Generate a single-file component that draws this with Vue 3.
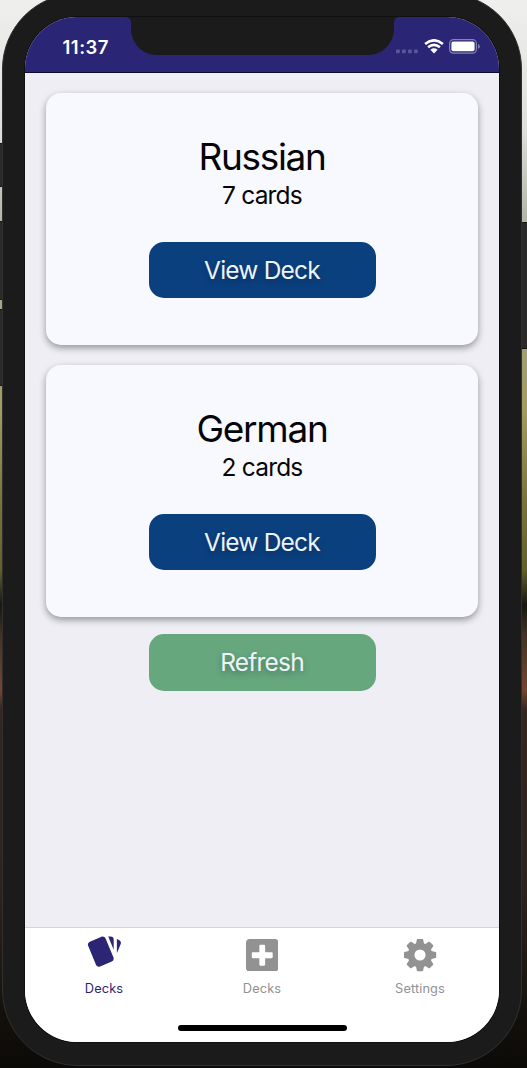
<script setup>
const decks = [
  { name: 'Russian', count: '7 cards' },
  { name: 'German', count: '2 cards' },
]
const teeth = [0, 45, 90, 135, 180, 225, 270, 315]
</script>

<template>
  <div class="desktop">
    <i class="side left mute"></i>
    <i class="side left up"></i>
    <i class="side left down"></i>
    <i class="side right power"></i>
    <div class="phone">
      <div class="screen">
        <header class="status">
          <span class="time">11:37</span>
          <svg class="notch" width="275" height="39" viewBox="0 0 275 39">
            <path d="M0 0H275C271 0 269 2 269 7V11C269 27 257 38 243 38H32C18 38 6 27 6 11V7C6 2 4 0 0 0Z" fill="#1b1b1b" />
          </svg>
          <div class="indicators">
            <svg width="23" height="5" viewBox="0 0 23 5" fill="#5b5898">
              <rect x="0" y=".5" width="3.800" height="3.800" rx="1" /><rect x="6" y=".5" width="3.800" height="3.800" rx="1" />
              <rect x="12" y=".5" width="3.800" height="3.800" rx="1" /><rect x="18" y=".5" width="3.800" height="3.800" rx="1" />
            </svg>
            <svg class="wifi" width="20" height="15" viewBox="0 0 20 15">
              <path d="M1.1 5.1Q10 -2.5 18.9 5.1M4.1 8.3Q10 3.3 15.9 8.3" fill="none" stroke="#fff" stroke-width="2.6" />
              <path d="M6.4 10.8Q10 7.9 13.6 10.8L10 14.5Z" fill="#fff" />
            </svg>
            <svg class="battery" width="32" height="15" viewBox="0 0 32 15">
              <rect x=".6" y=".7" width="26.8" height="13.4" rx="3.8" fill="none" stroke="#8583b4" stroke-width="1.2" />
              <rect x="2.4" y="2.5" width="23.2" height="9.8" rx="2" fill="#fff" />
              <path d="M29 5Q30.8 5.7 30.8 7.4T29 9.8Z" fill="#8583b4" />
            </svg>
          </div>
        </header>
        <main class="content">
          <section v-for="deck in decks" :key="deck.name" class="card">
            <h2>{{ deck.name }}</h2>
            <p>{{ deck.count }}</p>
            <button class="view">View Deck</button>
          </section>
          <button class="refresh">Refresh</button>
        </main>
        <nav class="tabs">
          <a class="tab active">
            <span class="icon">
              <svg width="38" height="38" viewBox="0 0 24 24" fill="currentColor">
                <path d="M21.47 4.35L20.13 3.79V12.82L22.56 6.96C22.97 5.94 22.5 4.77 21.47 4.35M1.97 8.05L6.93 20C7.24 20.77 7.97 21.24 8.74 21.26C9 21.26 9.27 21.21 9.53 21.1L16.9 18.05C17.65 17.74 18.11 17 18.13 16.26C18.14 16 18.09 15.71 18 15.45L13 3.5C12.71 2.73 11.97 2.26 11.19 2.25C10.93 2.25 10.67 2.31 10.42 2.4L3.06 5.45C2.04 5.87 1.55 7.04 1.97 8.05M18.12 4.25A2 2 0 0 0 16.12 2.25H14.67L18.12 10.59" />
              </svg>
            </span>
            <span class="label">Decks</span>
          </a>
          <a class="tab">
            <span class="icon lower">
              <svg width="32.500" height="32.500" viewBox="0 32 448 448" fill="currentColor">
                <path d="M400 32H48C21.500 32 0 53.500 0 80v352c0 26.500 21.500 48 48 48h352c26.500 0 48-21.500 48-48V80c0-26.500-21.500-48-48-48zm-32 252c0 6.600-5.400 12-12 12h-92v92c0 6.600-5.400 12-12 12h-56c-6.600 0-12-5.400-12-12v-92H92c-6.600 0-12-5.400-12-12v-56c0-6.600 5.400-12 12-12h92v-92c0-6.600 5.400-12 12-12h56c6.600 0 12 5.400 12 12v92h92c6.600 0 12 5.400 12 12v56z" />
              </svg>
            </span>
            <span class="label">Decks</span>
          </a>
          <a class="tab">
            <span class="icon lower">
              <svg width="33" height="33" viewBox="-16 -16 33 33">
                <circle r="8.900" fill="none" stroke="currentColor" stroke-width="6.600" />
                <path v-for="a in teeth" :key="a" :transform="`rotate(${a})`" d="M-4.200 -10.500L-3.100 -15.500Q-2.900 -16.200 -2.200 -16.200H2.200Q2.900 -16.200 3.100 -15.500L4.200 -10.500Z" fill="currentColor" />
              </svg>
            </span>
            <span class="label">Settings</span>
          </a>
          <i class="home"></i>
        </nav>
      </div>
    </div>
  </div>
</template>

<style>
body { margin: 0; overflow: hidden; }
</style>

<style scoped>
* { box-sizing: border-box; }
.desktop {
  position: relative;
  width: 527px;
  height: 1068px;
  overflow: hidden;
  padding-left: 2px;
  font-family: Inter, "Liberation Sans", sans-serif;
  background: linear-gradient(#efefed 0, #dededb 130px, #b5b5a5 220px, #a09e7b 345px, #a09d61 410px, #77743e 500px, #62602c 570px, #171711 605px, #423324 635px, #744630 690px, #33271f 710px, #2b241e 890px, #211a14 960px, #14110c 1010px, #0c0a08 1068px);
}
.side { position: absolute; background: #2b2a28; border: 1px solid #151514; }
.left { left: -2px; width: 6px; }
.right { right: -2px; width: 8px; }
.mute { top: 143px; height: 44px; }
.up { top: 221px; height: 79px; }
.down { top: 309px; height: 77px; }
.power { top: 222px; height: 127px; }
.phone {
  position: relative;
  width: 520px;
  height: 1073px;
  margin-top: -7px;
  padding: 23px 22px;
  border: 1px solid #303030;
  border-radius: 76px;
  background: #1b1b1b;
}
.screen {
  width: 474px;
  height: 1025px;
  display: flex;
  flex-direction: column;
  overflow: hidden;
  border-radius: 52px;
  background: #efeef5;
  box-shadow: 0 0 0 1px #101010;
}
.status {
  flex: none;
  height: 55.500px;
  display: grid;
  grid-template-columns: 100px 275px 99px;
  background: #2a2675;
  border-bottom: 1.500px solid #0d0936;
}
.time { padding: 18.500px 0 0 37.500px; font-size: 18.500px; line-height: 22px; font-weight: 600; letter-spacing: .5px; color: #fff; white-space: nowrap; }
.notch { display: block; }
.indicators { display: flex; align-items: flex-start; padding-top: 22px; margin-left: -4px; }
.indicators svg { flex: none; }
.indicators svg:first-child { margin-top: 10px; }
.wifi { margin-left: 5px; }
.battery { margin-left: 5px; }
.content {
  flex: 1;
  display: flex;
  flex-direction: column;
  align-items: center;
  padding-top: 20.500px;
}
.card {
  width: 432px;
  height: 252px;
  margin-bottom: 20px;
  padding-top: 42px;
  display: flex;
  flex-direction: column;
  align-items: center;
  border-radius: 15px;
  background: #f8f9ff;
  box-shadow: 0 3px 7px rgba(0, 0, 0, .38);
  color: #050508;
}
h2 { margin: 0; font-size: 37px; line-height: 44px; font-weight: 400; letter-spacing: -1.300px; }
p { margin: 0; padding-top: 1px; font-size: 24.500px; line-height: 31px; letter-spacing: -.8px; }
button {
  width: 227px;
  height: 56.500px;
  padding: 0;
  border: 0;
  border-radius: 15px;
  font: 400 24.500px/57px Inter, "Liberation Sans", sans-serif;
  letter-spacing: -.8px;
  color: #edf3fa;
  text-shadow: 0 3px 6px rgba(0, 0, 0, .3);
}
.view { margin-top: 30.500px; background: #0b407f; }
.refresh { margin-top: -3px; background: #66a77e; }
.tabs {
  position: relative;
  flex: none;
  height: 115px;
  display: grid;
  grid-template-columns: repeat(3, 158px);
  border-top: 1px solid #d4d4dd;
  background: #fff;
}
.tab { display: flex; flex-direction: column; align-items: center; padding-top: 5px; color: #929292; }
.active { color: #2a2675; }
.icon { height: 47px; }
.icon svg { display: block; }
.lower { padding-top: 5.500px; }
.label { font-size: 12.800px; line-height: 17px; letter-spacing: .1px; }
.home { position: absolute; left: 153px; top: 96.500px; width: 169px; height: 6px; border-radius: 3px; background: #000; }
</style>
